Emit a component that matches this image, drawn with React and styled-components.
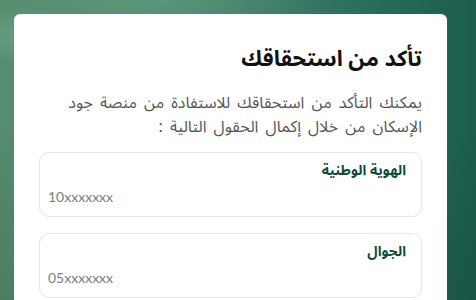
import styled, { createGlobalStyle } from "styled-components";

const GlobalStyle = createGlobalStyle`
  html, body {
    margin: 0;
    padding: 0;
    height: 100%;
    overflow: hidden;
  }
  body {
    font-family: "Noto Sans Arabic", "DejaVu Sans", sans-serif;
  }
`;

const Page = styled.div`
  width: 476px;
  height: 300px;
  overflow: hidden;
  box-sizing: border-box;
  padding: 14px 29px 0 14px;
  background:
    radial-gradient(ellipse 60px 30px at 20px 35px, rgba(140, 190, 160, 0.35), transparent),
    radial-gradient(ellipse 160px 40px at 160px 0px, rgba(120, 175, 145, 0.35), transparent),
    linear-gradient(180deg, rgba(0, 0, 0, 0) 40%, rgba(0, 20, 10, 0.12) 100%),
    linear-gradient(90deg, #578c6e 0%, #4f8a70 30%, #3a7a65 60%, #276b5a 80%, #1b5e4e 100%);
`;

const Card = styled.div`
  direction: rtl;
  background: #ffffff;
  border-radius: 6px;
  height: 400px;
  padding: 30px 25px 0 25px;
  box-sizing: border-box;
`;

const Title = styled.h1`
  margin: 0;
  font-size: 22px;
  font-weight: 700;
  line-height: 30px;
  color: #111111;
`;

const Lead = styled.p`
  margin: 17px 0 13px;
  font-size: 16px;
  word-spacing: 3px;
  line-height: 24px;
  color: #555555;
`;

const Fields = styled.div`
  display: flex;
  flex-direction: column;
  gap: 16px;
`;

const Field = styled.label`
  display: flex;
  flex-direction: column;
  height: 65px;
  box-sizing: border-box;
  border: 1px solid #e6e6e6;
  border-radius: 10px;
  padding: 8px 15px 0 8px;
`;

const FieldLabel = styled.span`
  font-size: 14px;
  font-weight: 700;
  line-height: 20px;
  color: #0e4b3d;
`;

const FieldInput = styled.input`
  direction: ltr;
  text-align: left;
  border: none;
  outline: none;
  background: transparent;
  padding: 0;
  margin-top: 5px;
  height: 20px;
  font-family: "Lato", "DejaVu Sans", sans-serif;
  font-size: 14px;
  color: #333;

  &::placeholder {
    color: #7d7d7d;
  }
`;

const fields = [
  { name: "national_id", label: "الهوية الوطنية", placeholder: "10xxxxxxx" },
  { name: "mobile", label: "الجوال", placeholder: "05xxxxxxx" },
];

const App = () => {
  return (
    <>
      <GlobalStyle />
      <Page>
        <Card>
          <Title>تأكد من استحقاقك</Title>
          <Lead>
            يمكنك التأكد من استحقاقك للاستفادة من منصة جود الإسكان من خلال إكمال الحقول التالية :
          </Lead>
          <Fields>
            {fields.map((f) => (
              <Field key={f.name}>
                <FieldLabel>{f.label}</FieldLabel>
                <FieldInput name={f.name} placeholder={f.placeholder} />
              </Field>
            ))}
          </Fields>
        </Card>
      </Page>
    </>
  );
};

export default App;
